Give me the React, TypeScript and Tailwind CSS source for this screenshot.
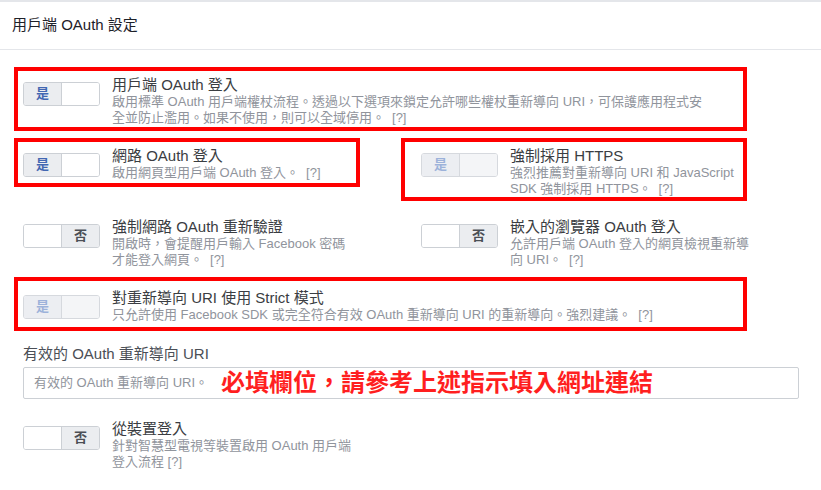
import React from "react";

type Kind = "yes" | "yesOff" | "no";

function Toggle({ kind }: { kind: Kind }) {
  if (kind === "yes") {
    return (
      <div className="mt-[6px] flex h-[24px] w-[77px] shrink-0 overflow-hidden rounded-[3px] border border-[#ccd0d5]">
        <div className="flex w-[38px] items-center justify-center border-r border-[#ccd0d5] bg-[#ebedf0] text-[13px] font-bold text-[#4267b2]">
          是
        </div>
        <div className="flex-1 bg-white" />
      </div>
    );
  }
  if (kind === "yesOff") {
    return (
      <div className="mt-[6px] flex h-[24px] w-[77px] shrink-0 overflow-hidden rounded-[3px] border border-[#d6d9de]">
        <div className="flex w-[38px] items-center justify-center border-r border-[#d6d9de] bg-[#eceef2] text-[13px] font-bold text-[#9cb2da]">
          是
        </div>
        <div className="flex-1 bg-[#f4f5f7]" />
      </div>
    );
  }
  return (
    <div className="mt-[6px] flex h-[24px] w-[77px] shrink-0 overflow-hidden rounded-[3px] border border-[#ccd0d5]">
      <div className="w-[38px] border-r border-[#ccd0d5] bg-white" />
      <div className="flex flex-1 items-center justify-center bg-[#ebedf0] text-[13px] font-bold text-[#4b4f56]">
        否
      </div>
    </div>
  );
}

function Q() {
  return <span className="ml-[7px]">[?]</span>;
}

function Setting({
  kind,
  title,
  children,
}: {
  kind: Kind;
  title: string;
  children: React.ReactNode;
}) {
  return (
    <div className="flex items-start gap-[12px]">
      <Toggle kind={kind} />
      <div className="flex flex-col">
        <div className="text-[15px] leading-[18px] text-[#3a3d42]">{title}</div>
        <div className="text-[13px] leading-[16px] text-[#90949c]">{children}</div>
      </div>
    </div>
  );
}

export default function App() {
  return (
    <div className="min-h-[490px] w-full bg-white font-['Liberation_Sans','Noto_Sans_CJK_TC',sans-serif]">
      <div className="flex h-[50px] items-center border-t-2 border-b border-t-[#e4e6ea] border-b-[#e4e6ea] pl-[12px] text-[15px] font-normal text-[#1d2129]">
        用戶端 OAuth 設定
      </div>

      <div className="flex flex-col">
        {/* Row 1 */}
        <div className="ml-[14px] mt-[17px] w-[733px] border-4 border-[#ff0000] pb-[1px] pl-[5px] pt-[5px]">
          <Setting kind="yes" title="用戶端 OAuth 登入">
            啟用標準 OAuth 用戶端權杖流程。透過以下選項來鎖定允許哪些權杖重新導向 URI，可保護應用程式安
            <br />
            全並防止濫用。如果不使用，則可以全域停用。
            <Q />
          </Setting>
        </div>

        {/* Row 2 */}
        <div className="mt-[7px] flex items-start">
          <div className="ml-[14px] w-[346px] border-4 border-[#ff0000] pb-[2px] pl-[5px] pt-[5px]">
            <Setting kind="yes" title="網路 OAuth 登入">
              啟用網頁型用戶端 OAuth 登入。
              <Q />
            </Setting>
          </div>
          <div className="ml-[41px] w-[346px] border-4 border-[#ff0000] pl-[16px] pt-[5px]">
            <Setting kind="yesOff" title="強制採用 HTTPS">
              強烈推薦對重新導向 URI 和 JavaScript
              <br />
              SDK 強制採用 HTTPS。
              <Q />
            </Setting>
          </div>
        </div>

        {/* Row 3 */}
        <div className="mt-[17px] flex items-start">
          <div className="ml-[23px] w-[398px]">
            <Setting kind="no" title="強制網路 OAuth 重新驗證">
              開啟時，會提醒用戶輸入 Facebook 密碼
              <br />
              才能登入網頁。
              <Q />
            </Setting>
          </div>
          <div>
            <Setting kind="no" title="嵌入的瀏覽器 OAuth 登入">
              允許用戶端 OAuth 登入的網頁檢視重新導
              <br />
              向 URI。
              <Q />
            </Setting>
          </div>
        </div>

        {/* Row 4 */}
        <div className="ml-[14px] mt-[9px] w-[733px] border-4 border-[#ff0000] pb-[4px] pl-[5px] pt-[8px]">
          <Setting kind="yesOff" title="對重新導向 URI 使用 Strict 模式">
            只允許使用 Facebook SDK 或完全符合有效 OAuth 重新導向 URI 的重新導向。強烈建議。
            <Q />
          </Setting>
        </div>

        {/* URI field */}
        <div className="ml-[23px] mt-[14px] text-[15px] leading-[18px] text-[#4b4f56]">
          有效的 OAuth 重新導向 URI
        </div>
        <div className="ml-[23px] mt-[4px] flex h-[32px] w-[776px] items-center rounded-[2px] border border-[#ccd0d5] pl-[10px]">
          <span className="text-[13px] text-[#90949c]">有效的 OAuth 重新導向 URI。</span>
          <span className="ml-[13px] text-[24px] font-bold leading-none text-[#ff1f1f]">
            必填欄位，請參考上述指示填入網址連結
          </span>
        </div>

        {/* Row 5 */}
        <div className="ml-[23px] mt-[21px]">
          <Setting kind="no" title="從裝置登入">
            針對智慧型電視等裝置啟用 OAuth 用戶端
            <br />
            登入流程 [?]
          </Setting>
        </div>
      </div>
    </div>
  );
}
